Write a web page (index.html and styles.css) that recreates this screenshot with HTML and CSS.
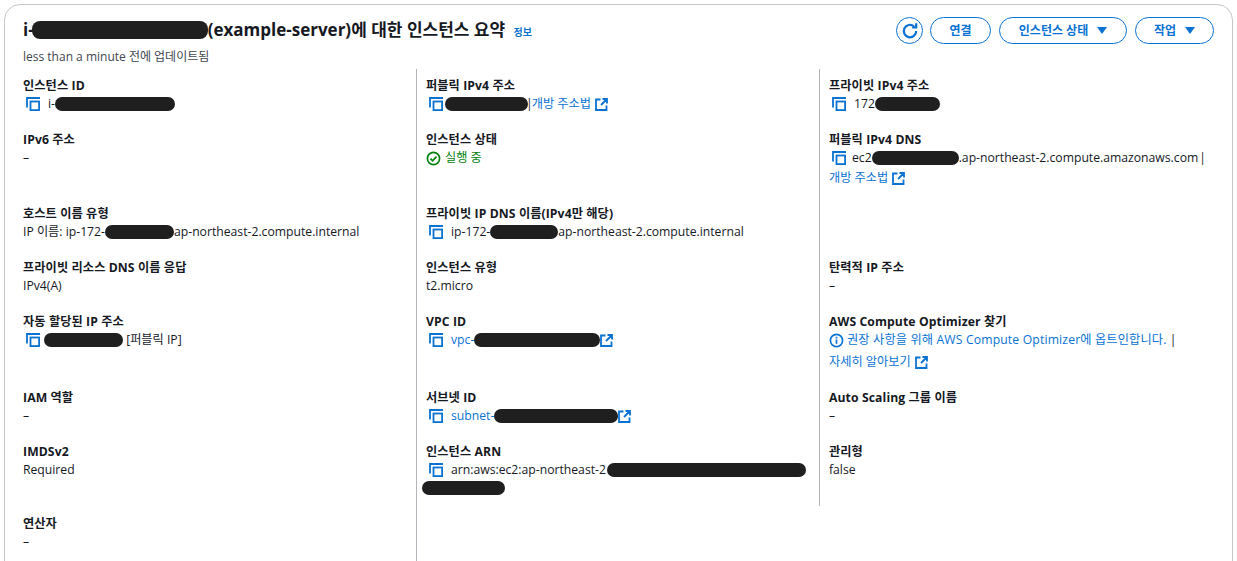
FILE: index.html
```html
<!DOCTYPE html>
<html lang="ko">
<head>
<meta charset="utf-8">
<title>인스턴스 요약</title>
<link rel="stylesheet" href="styles.css">
</head>
<body>
<svg class="defs" width="0" height="0" aria-hidden="true">
  <symbol id="copy" viewBox="0 0 14 14"><path d="M1 10.500V1h13" fill="none" stroke="currentColor" stroke-width="1.800"/><rect x="4.500" y="4.500" width="8.600" height="8.600" fill="none" stroke="currentColor" stroke-width="1.800"/></symbol>
  <symbol id="ext" viewBox="0 0 13 13"><path d="M5.500 1.500H1v10.500h10.500V7.500M7.500 1H12v4.500M12 1 6 7" fill="none" stroke="currentColor" stroke-width="1.800"/></symbol>
</svg>
<main class="card">
  <header class="head">
    <div>
      <h1 class="title">i-<span class="blob blob-title"></span>(example-server)에 대한 인스턴스 요약 <a class="info">정보</a></h1>
      <p class="updated">less than a minute 전에 업데이트됨</p>
    </div>
    <div class="actions">
      <button class="btn btn-icon" aria-label="새로 고침"><svg width="18" height="18" viewBox="0 0 16 16"><path d="M13.500 8A5.500 5.500 0 1 1 11.500 3.800M13.500 1.200v3.600h-3.600" fill="none" stroke="currentColor" stroke-width="2"/></svg></button>
      <button class="btn btn-connect">연결</button>
      <button class="btn btn-state">인스턴스 상태<span class="caret"></span></button>
      <button class="btn btn-act">작업<span class="caret"></span></button>
    </div>
  </header>
  <section class="grid">
    <div class="cell c1 first"><div class="lab">인스턴스 ID</div><div class="val"><svg class="ico"><use href="#copy"/></svg>i-<span class="blob" style="width:120px"></span></div></div>
    <div class="cell c1"><div class="lab">IPv6 주소</div><div class="val">–</div></div>
    <div class="cell c1"><div class="lab">호스트 이름 유형</div><div class="val">IP 이름: ip-172-<span class="blob" style="width:69px"></span>ap-northeast-2.compute.internal</div></div>
    <div class="cell c1"><div class="lab">프라이빗 리소스 DNS 이름 응답</div><div class="val">IPv4(A)</div></div>
    <div class="cell c1"><div class="lab">자동 할당된 IP 주소</div><div class="val"><svg class="ico ico-tight-l"><use href="#copy"/></svg><span class="blob" style="width:79px"></span>&nbsp;[퍼블릭 IP]</div></div>
    <div class="cell c1"><div class="lab">IAM 역할</div><div class="val">–</div></div>
    <div class="cell c1"><div class="lab">IMDSv2</div><div class="val">Required</div></div>
    <div class="cell c1 last"><div class="lab">연산자</div><div class="val">–</div></div>

    <div class="cell c2 first"><div class="lab">퍼블릭 IPv4 주소</div><div class="val"><svg class="ico ico-tight"><use href="#copy"/></svg><span class="blob" style="width:83px"></span><span class="sep">|</span><a class="link">개방 주소법<svg class="ext"><use href="#ext"/></svg></a></div></div>
    <div class="cell c2"><div class="lab">인스턴스 상태</div><div class="val ok"><svg class="okico" viewBox="0 0 16 16"><circle cx="8" cy="8" r="6.500" fill="none" stroke="currentColor" stroke-width="1.800"/><path d="M4.800 8.200 7 10.400l4.200-4.400" fill="none" stroke="currentColor" stroke-width="1.800"/></svg>실행 중</div></div>
    <div class="cell c2"><div class="lab">프라이빗 IP DNS 이름(IPv4만 해당)</div><div class="val"><svg class="ico"><use href="#copy"/></svg>ip-172-<span class="blob" style="width:68px"></span>ap-northeast-2.compute.internal</div></div>
    <div class="cell c2"><div class="lab">인스턴스 유형</div><div class="val">t2.micro</div></div>
    <div class="cell c2"><div class="lab">VPC ID</div><div class="val"><svg class="ico"><use href="#copy"/></svg><a class="link">vpc-<span class="blob" style="width:126px"></span><svg class="ext ext-close"><use href="#ext"/></svg></a></div></div>
    <div class="cell c2"><div class="lab">서브넷 ID</div><div class="val"><svg class="ico"><use href="#copy"/></svg><a class="link">subnet-<span class="blob" style="width:124px"></span><svg class="ext ext-close"><use href="#ext"/></svg></a></div></div>
    <div class="cell c2 arn"><div class="lab">인스턴스 ARN</div><div class="val"><svg class="ico"><use href="#copy"/></svg>arn:aws:ec2:ap-northeast-2<span class="blob blob-arn" style="width:199px"></span></div><div class="val val-wrap"><span class="blob" style="width:83px"></span></div></div>
    <div class="cell filler"></div>

    <div class="cell c3 first"><div class="lab">프라이빗 IPv4 주소</div><div class="val"><svg class="ico"><use href="#copy"/></svg>172<span class="blob" style="width:65px"></span></div></div>
    <div class="cell c3"><div class="lab">퍼블릭 IPv4 DNS</div><div class="val"><svg class="ico ico-mid"><use href="#copy"/></svg>ec2<span class="blob" style="width:87px"></span>.ap-northeast-2.compute.amazonaws.com<span class="sep-end">|</span></div><div class="val val-next"><a class="link">개방 주소법<svg class="ext"><use href="#ext"/></svg></a></div></div>
    <div class="cell c3"></div>
    <div class="cell c3"><div class="lab">탄력적 IP 주소</div><div class="val">–</div></div>
    <div class="cell c3"><div class="lab">AWS Compute Optimizer 찾기</div><div class="val"><a class="link link-wide"><svg class="infoico" viewBox="0 0 16 16"><circle cx="8" cy="8" r="6.500" fill="none" stroke="currentColor" stroke-width="1.800"/><path d="M8 7v4.500M8 4v1.800" fill="none" stroke="currentColor" stroke-width="1.800"/></svg>권장 사항을 위해 AWS Compute Optimizer에 옵트인합니다.</a>&nbsp;|</div><div class="val val-next2"><a class="link">자세히 알아보기<svg class="ext"><use href="#ext"/></svg></a></div></div>
    <div class="cell c3"><div class="lab">Auto Scaling 그룹 이름</div><div class="val">–</div></div>
    <div class="cell c3"><div class="lab">관리형</div><div class="val">false</div></div>
  </section>
</main>
</body>
</html>
```
FILE: styles.css
```css
html, body { margin: 0; height: 561px; overflow: hidden; background: #fff; }
body { padding: 4px 4px 0 4px; box-sizing: border-box; font-family: "Open Sans", "Noto Sans CJK KR", sans-serif; font-size: 12.2px; line-height: 18px; color: #16191f; }
.defs { position: absolute; }
.card { border: 1px solid #c6c6cd; border-radius: 16px; height: 640px; box-sizing: border-box; }
.head { display: flex; justify-content: space-between; height: 64px; padding: 12px 18px 0 18px; box-sizing: border-box; }
.title { margin: 0; font-size: 17px; line-height: 26px; font-weight: 700; color: #16191f; white-space: nowrap; }
.info { font-size: 10px; color: #0972d3; margin-left: 4px; }
.updated { margin: 3px 0 0; color: #414750; font-size: 12px; line-height: 18px; }
.actions { display: flex; gap: 8px; }
.btn { height: 27px; box-sizing: border-box; background: #fff; border: 1.5px solid #0972d3; border-radius: 14px; color: #0972d3; font: 700 12px/18px "Open Sans", "Noto Sans CJK KR", sans-serif; padding: 0; display: flex; align-items: center; justify-content: center; }
.btn-icon { width: 27px; margin-right: -1px; }
.btn-connect { width: 61px; }
.btn-state { width: 128px; }
.btn-act { width: 79px; }
.caret { width: 0; height: 0; border-left: 5px solid transparent; border-right: 5px solid transparent; border-top: 7px solid #0972d3; margin-left: 9px; }
.grid { display: grid; grid-template-columns: 412px 403px 1fr; grid-template-rows: repeat(8, auto); grid-auto-flow: column; }
.cell { padding: 0 0 18px 18px; min-width: 0; white-space: nowrap; }
.first { padding-top: 8px; }
.c1 { border-right: 1px solid #b4b4bb; }
.c2 { border-right: 1px solid #b4b4bb; padding-left: 9px; }
.c3 { padding-left: 9px; }
.arn { padding-bottom: 9px; margin-bottom: 9px; }
.last { padding-bottom: 60px; }
.lab { font-weight: 700; color: #16191f; letter-spacing: .1px; }
.val { display: flex; align-items: center; height: 18px; color: #16191f; }
.val-wrap { margin-left: -4px; }
.val-next { margin-top: 2px; }
.val-next2 { margin-top: 4px; }
.ico { width: 14px; height: 14px; color: #0972d3; margin: 0 8px 0 3px; flex: none; }
.ico-tight { margin-right: 2px; }
.ico-tight-l { margin-right: 4px; }
.ico-mid { margin-right: 6px; }
.blob { display: inline-block; height: 14px; background: #1f1f1f; border-radius: 7px; flex: none; vertical-align: middle; }
.blob-title { width: 176px; height: 18px; border-radius: 8px; vertical-align: -3px; margin-left: -2px; }
.blob-arn { margin-left: 1px; }
.sep { margin: 0 -1px 0 -2px; }
.sep-end { margin-left: 1px; }
.link { color: #0972d3; display: inline-flex; align-items: center; white-space: pre; }
.link-wide { letter-spacing: .15px; }
.ext { width: 13px; height: 13px; margin-left: 4px; color: #0972d3; flex: none; }
.ext-close { margin-left: 0; }
.ok { color: #037f0c; }
.okico { width: 15px; height: 15px; margin-right: 4px; color: #037f0c; }
.infoico { width: 15px; height: 15px; margin-right: 3px; }
```
